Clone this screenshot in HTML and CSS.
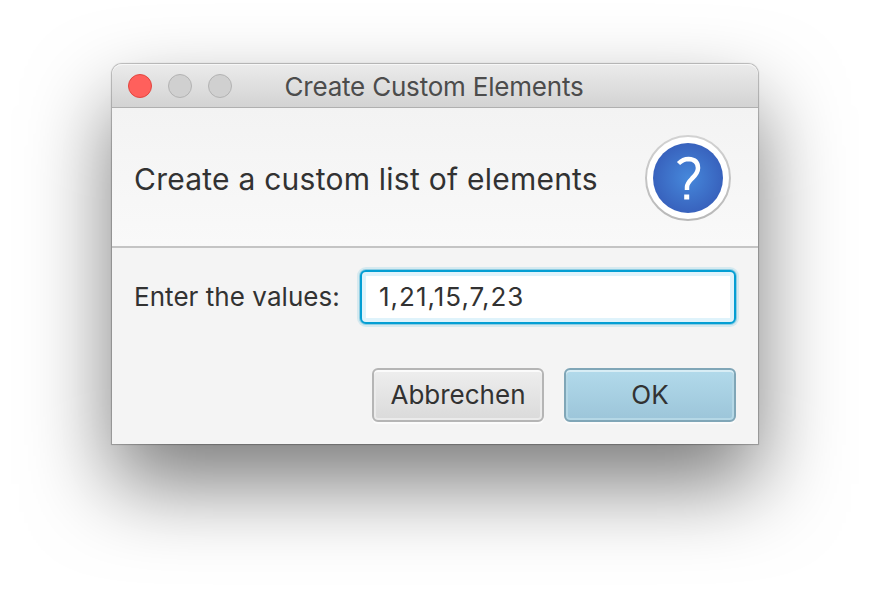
FILE: index.html
```
<!DOCTYPE html>
<html lang="en">
<head>
<meta charset="utf-8">
<title>Create Custom Elements</title>
<link rel="stylesheet" href="styles.css">
</head>
<body>
<main class="dialog">
  <div class="titlebar">
    <div class="lights"><span class="light close"></span><span class="light"></span><span class="light"></span></div>
    <span class="title">Create Custom Elements</span>
  </div>
  <header class="header">
    <span class="heading">Create a custom list of elements</span>
    <svg class="help" viewBox="0 0 88 88">
      <defs>
        <radialGradient id="blue"><stop offset="0" stop-color="#4688db"/><stop offset="1" stop-color="#3862bd"/></radialGradient>
        <linearGradient id="rim" x2="0" y2="1"><stop offset="0" stop-color="#d2d2d2"/><stop offset="1" stop-color="#b8b8b8"/></linearGradient>
      </defs>
      <circle cx="44" cy="44" r="42" fill="#fff" stroke="url(#rim)" stroke-width="2"/>
      <circle cx="44" cy="44" r="35" fill="url(#blue)"/>
      <path d="M34.5 29.5Q39 25 44.5 25Q54 25.500 54 34Q54 39 48 44.500Q43 49.500 43 53V56" fill="none" stroke="#fff" stroke-width="4.5"/>
      <rect x="40.200" y="60.500" width="5" height="5" fill="#fff"/>
    </svg>
  </header>
  <div class="content">
    <label class="label" for="values">Enter the values:</label>
    <input class="field" id="values" value="1,21,15,7,23">
  </div>
  <div class="actions">
    <button class="button">Abbrechen</button>
    <button class="button primary">OK</button>
  </div>
</main>
</body>
</html>
```
FILE: styles.css
```
* { box-sizing: border-box; }
body { margin: 0; height: 604px; padding: 64px 112px; background: #fff; overflow: hidden; font-family: Inter, sans-serif; color: #323232; }
.dialog { width: 646px; height: 380px; background: #f4f4f4; border-radius: 10px 10px 0 0; box-shadow: 0 0 1px 1px rgba(0,0,0,.25), 0 40px 84px rgba(0,0,0,.52); }
.titlebar { height: 44px; display: grid; grid-template-columns: 150px 1fr 152px; align-items: center; border-bottom: 1px solid #b0b0b0; border-radius: 10px 10px 0 0; background: linear-gradient(#ebebeb, #d3d3d3); box-shadow: inset 0 1px #f7f7f7; }
.lights { display: flex; gap: 16px; padding-left: 16px; }
.light { width: 24px; height: 24px; border: 1px solid #b3b3b3; border-radius: 50%; background: #d0d0d0; }
.close { border-color: #e2463f; background: #ff605c; }
.title { justify-self: center; padding-top: 2px; font-size: 26px; line-height: 34px; letter-spacing: -.2px; white-space: nowrap; color: #4c4c4c; }
.header { height: 140px; display: flex; align-items: center; justify-content: space-between; padding: 2px 26px 0 22px; border-bottom: 2px solid #c4c4c4; background: linear-gradient(#f3f3f3, #f9f9f9); }
.heading { padding-top: 2px; font-size: 30px; letter-spacing: .24px; white-space: nowrap; }
.help { width: 88px; height: 88px; }
.content { display: flex; align-items: center; justify-content: space-between; padding: 22px 22px 0; }
.label { padding-bottom: 2px; font-size: 26px; letter-spacing: .05px; white-space: nowrap; }
.field { width: 376px; height: 54px; margin: 0; padding: 0 17px 2px; border: 2px solid #039ed3; border-radius: 6px; outline: 0; background: #fff; box-shadow: inset 0 0 0 4px #dff3fb, 0 0 0 1px #8dcde3, 0 0 0 3px #d5e9ef; font: 26px Inter, sans-serif; letter-spacing: 1px; color: #323232; }
.actions { display: flex; justify-content: flex-end; gap: 20px; padding: 44px 22px 0; }
.button { width: 172px; height: 54px; padding: 0 0 2px; border: 2px solid #b5b5b5; border-radius: 6px; background: linear-gradient(#eee, #dadada); box-shadow: inset 0 2px #fbfbfb, inset 0 0 0 2px #ebebeb, 0 2px #fbfbfb; font: 26px Inter, sans-serif; color: #323232; }
.primary { border-color: #80a6b7; background: linear-gradient(#b2daeb, #9cc5d9); box-shadow: inset 0 2px #d8edf5, inset 0 0 0 2px #b5d8e6, 0 2px #fbfbfb; }
```
